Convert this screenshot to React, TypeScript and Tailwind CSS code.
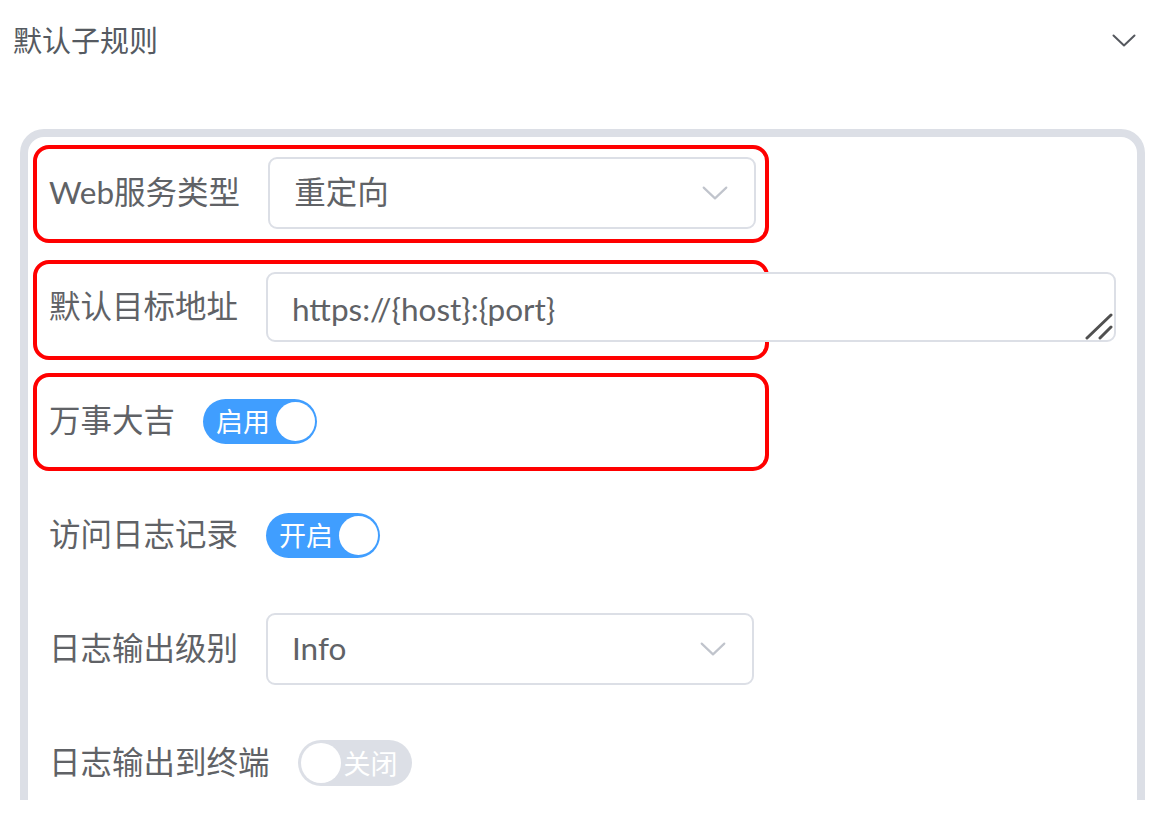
import React from "react";

const FONT = { fontFamily: 'Lato, "Noto Sans CJK SC", sans-serif' };

function Chevron({ className, color }: { className?: string; color: string }) {
  return (
    <svg className={className} viewBox="0 0 24 13" fill="none">
      <path d="M1.5 1.5 L12 11.5 L22.5 1.5" stroke={color} strokeWidth="2" strokeLinecap="round" strokeLinejoin="round" />
    </svg>
  );
}

function RedBox({ top, height }: { top: string; height: string }) {
  return (
    <div
      className={`pointer-events-none absolute left-[-16px] w-[736px] rounded-[16px] border-[4px] border-[#ff0000] ${top} ${height}`}
    />
  );
}

function Label({ children }: { children: React.ReactNode }) {
  return <div className="mr-[28px] text-[31.5px] leading-none text-[#606266] whitespace-nowrap">{children}</div>;
}

function Select({ value }: { value: string }) {
  return (
    <div className="flex h-[72px] w-[488px] items-center justify-between rounded-[9px] border-2 border-[#dcdfe6] bg-white pl-[24px] pr-[26px]">
      <span className="text-[31.5px] leading-none text-[#606266]">{value}</span>
      <Chevron className="h-[14px] w-[26px]" color="#c0c4cc" />
    </div>
  );
}

function Switch({ on, text }: { on: boolean; text: string }) {
  if (on) {
    return (
      <div className="flex h-[45px] w-[114px] items-center justify-between rounded-full bg-[#409eff] pl-[13px] pr-[2px]">
        <span className="text-[27px] leading-none text-white">{text}</span>
        <div className="h-[39px] w-[39px] rounded-full bg-white" />
      </div>
    );
  }
  return (
    <div className="flex h-[46px] w-[114px] items-center justify-between rounded-full bg-[#dcdfe6] pl-[3px] pr-[14px]">
      <div className="h-[40px] w-[40px] rounded-full bg-white" />
      <span className="text-[27px] leading-none text-white">{text}</span>
    </div>
  );
}

export default function App() {
  return (
    <div className="h-[827px] w-[1154px] overflow-hidden bg-white" style={FONT}>
      <div className="flex h-[80px] items-center justify-between pl-[13px] pr-[18px]">
        <span className="text-[29px] leading-none text-[#555a61]">默认子规则</span>
        <Chevron className="h-[13px] w-[24px]" color="#55585e" />
      </div>
      <div className="ml-[20px] mr-[9px] mt-[49px] h-[671px] rounded-t-[24px] border-[8px] border-b-0 border-[#dcdfe6] pl-[21px] pr-[21px] pt-[20px]">
        <div className="flex flex-col gap-[42px]">
          <div className="relative flex h-[72px] items-center">
            <RedBox top="top-[-12px]" height="h-[98px]" />
            <Label>Web服务类型</Label>
            <Select value="重定向" />
          </div>
          <div className="relative flex h-[72px] items-center">
            <RedBox top="top-[-11px]" height="h-[100px]" />
            <Label>默认目标地址</Label>
            <div className="relative h-[70px] flex-1 rounded-[9px] border-2 border-[#dcdfe6] bg-white pl-[24px] pt-[20px]">
              <span className="text-[31.5px] leading-none text-[#606266]">https://{"{host}"}:{"{port}"}</span>
              <svg className="absolute bottom-0 right-0 h-[30px] w-[30px]" viewBox="0 0 30 30" fill="none">
                <path d="M3 28 L27 5" stroke="#505050" strokeWidth="3" strokeLinecap="round" />
                <path d="M16 28 L27 17" stroke="#505050" strokeWidth="3" strokeLinecap="round" />
              </svg>
            </div>
          </div>
          <div className="relative flex h-[72px] items-center">
            <RedBox top="top-[-12px]" height="h-[98px]" />
            <Label>万事大吉</Label>
            <Switch on text="启用" />
          </div>
          <div className="relative flex h-[72px] items-center">
            <Label>访问日志记录</Label>
            <Switch on text="开启" />
          </div>
          <div className="relative flex h-[72px] items-center">
            <Label>日志输出级别</Label>
            <Select value="Info" />
          </div>
          <div className="relative flex h-[72px] items-center">
            <Label>日志输出到终端</Label>
            <Switch on={false} text="关闭" />
          </div>
        </div>
      </div>
    </div>
  );
}
